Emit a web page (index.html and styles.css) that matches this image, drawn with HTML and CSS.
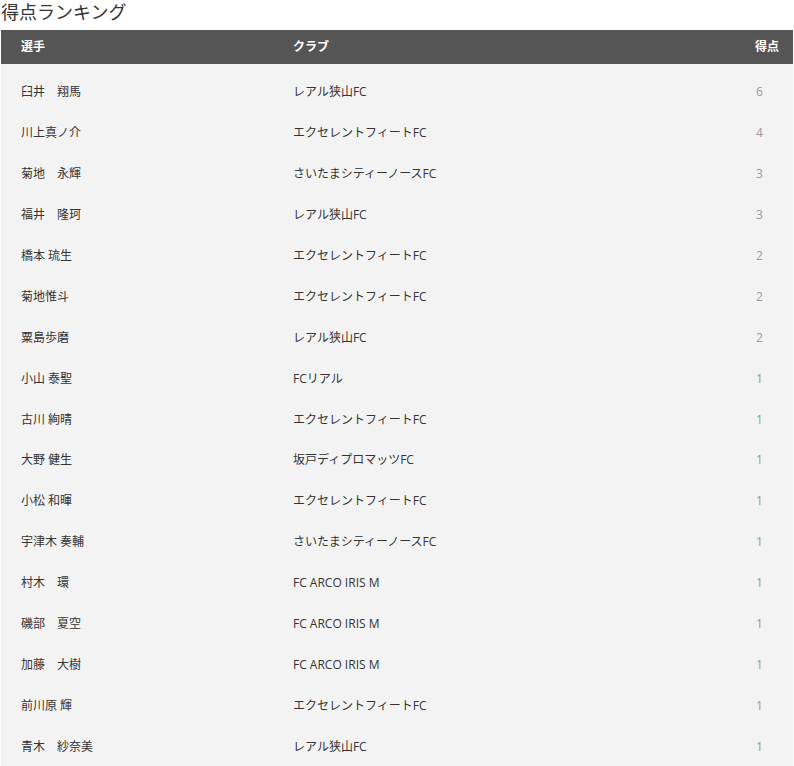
FILE: index.html
```html
<!DOCTYPE html>
<html lang="ja">
<head>
<meta charset="utf-8">
<link rel="stylesheet" href="styles.css">
</head>
<body>
<h2 class="title">得点ランキング</h2>
<div class="ranking">
  <div class="row head">
    <div class="c-name">選手</div>
    <div class="c-club">クラブ</div>
    <div class="c-pts">得点</div>
  </div>
  <div class="body">
    <div class="row"><div class="c-name">臼井　翔馬</div><div class="c-club">レアル狭山FC</div><div class="c-pts">6</div></div>
    <div class="row"><div class="c-name">川上真ノ介</div><div class="c-club">エクセレントフィートFC</div><div class="c-pts">4</div></div>
    <div class="row"><div class="c-name">菊地　永輝</div><div class="c-club">さいたまシティーノースFC</div><div class="c-pts">3</div></div>
    <div class="row"><div class="c-name">福井　隆珂</div><div class="c-club">レアル狭山FC</div><div class="c-pts">3</div></div>
    <div class="row"><div class="c-name">橋本 琉生</div><div class="c-club">エクセレントフィートFC</div><div class="c-pts">2</div></div>
    <div class="row"><div class="c-name">菊地惟斗</div><div class="c-club">エクセレントフィートFC</div><div class="c-pts">2</div></div>
    <div class="row"><div class="c-name">粟島歩磨</div><div class="c-club">レアル狭山FC</div><div class="c-pts">2</div></div>
    <div class="row"><div class="c-name">小山 泰聖</div><div class="c-club">FCリアル</div><div class="c-pts">1</div></div>
    <div class="row"><div class="c-name">古川 絢晴</div><div class="c-club">エクセレントフィートFC</div><div class="c-pts">1</div></div>
    <div class="row"><div class="c-name">大野 健生</div><div class="c-club">坂戸ディプロマッツFC</div><div class="c-pts">1</div></div>
    <div class="row"><div class="c-name">小松 和暉</div><div class="c-club">エクセレントフィートFC</div><div class="c-pts">1</div></div>
    <div class="row"><div class="c-name">宇津木 奏輔</div><div class="c-club">さいたまシティーノースFC</div><div class="c-pts">1</div></div>
    <div class="row"><div class="c-name">村木　環</div><div class="c-club">FC ARCO IRIS M</div><div class="c-pts">1</div></div>
    <div class="row"><div class="c-name">磯部　夏空</div><div class="c-club">FC ARCO IRIS M</div><div class="c-pts">1</div></div>
    <div class="row"><div class="c-name">加藤　大樹</div><div class="c-club">FC ARCO IRIS M</div><div class="c-pts">1</div></div>
    <div class="row"><div class="c-name">前川原 輝</div><div class="c-club">エクセレントフィートFC</div><div class="c-pts">1</div></div>
    <div class="row"><div class="c-name">青木　紗奈美</div><div class="c-club">レアル狭山FC</div><div class="c-pts">1</div></div>
  </div>
</div>
</body>
</html>
```
FILE: styles.css
```css
html, body {
  margin: 0;
  padding: 0;
  background: #fff;
}
body {
  font-family: "Open Sans", "Noto Sans CJK JP", sans-serif;
  color: #333;
  font-size: 12px;
}
.title {
  margin: 0;
  height: 30px;
  font-size: 18px;
  font-weight: normal;
  line-height: 24px;
  color: #333;
  padding-left: 1px;
}
.ranking {
  margin: 0 1px;
}
.row {
  display: grid;
  grid-template-columns: 272px 462px 1fr;
  align-items: center;
  padding-left: 20px;
  height: 40.9px;
  line-height: 16px;
}
.row.head {
  height: 34px;
  background: #555;
  color: #fff;
  font-weight: bold;
}
.body {
  background: #f3f3f3;
  padding-top: 8px;
  padding-bottom: 10px;
}
.c-pts {
  color: #999;
  padding-left: 1px;
}
.head .c-pts {
  color: #fff;
  padding-left: 0;
}
```
